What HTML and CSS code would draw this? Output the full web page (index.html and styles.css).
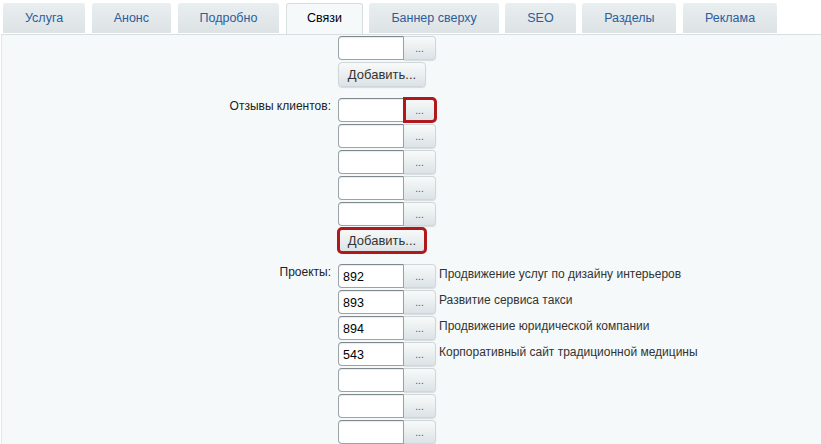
FILE: index.html
```html
<!DOCTYPE html>
<html lang="ru">
<head>
    <meta charset="UTF-8">
    <meta name="viewport" content="width=device-width, initial-scale=1.0">
    <title>Редактирование услуги</title>
    <link rel="stylesheet" href="styles.css">
</head>
<body>
    <div class="tabs">
        <a class="tab">Услуга</a>
        <a class="tab">Анонс</a>
        <a class="tab">Подробно</a>
        <a class="tab active">Связи</a>
        <a class="tab">Баннер сверху</a>
        <a class="tab">SEO</a>
        <a class="tab">Разделы</a>
        <a class="tab">Реклама</a>
    </div>

    <div class="panel">
        <div class="field">
            <div class="field-label"></div>
            <div class="field-values">
                <div class="item"><input type="text" class="id-input"><button class="pick">...</button></div>
                <button class="add">Добавить...</button>
            </div>
        </div>

        <div class="field">
            <div class="field-label">Отзывы клиентов:</div>
            <div class="field-values">
                <div class="item"><input type="text" class="id-input"><button class="pick marked">...</button></div>
                <div class="item"><input type="text" class="id-input"><button class="pick">...</button></div>
                <div class="item"><input type="text" class="id-input"><button class="pick">...</button></div>
                <div class="item"><input type="text" class="id-input"><button class="pick">...</button></div>
                <div class="item"><input type="text" class="id-input"><button class="pick">...</button></div>
                <button class="add marked">Добавить...</button>
            </div>
        </div>

        <div class="field">
            <div class="field-label">Проекты:</div>
            <div class="field-values">
                <div class="item"><input type="text" class="id-input" value="892"><button class="pick">...</button><span class="item-name">Продвижение услуг по дизайну интерьеров</span></div>
                <div class="item"><input type="text" class="id-input" value="893"><button class="pick">...</button><span class="item-name">Развитие сервиса такси</span></div>
                <div class="item"><input type="text" class="id-input" value="894"><button class="pick">...</button><span class="item-name">Продвижение юридической компании</span></div>
                <div class="item"><input type="text" class="id-input" value="543"><button class="pick">...</button><span class="item-name">Корпоративный сайт традиционной медицины</span></div>
                <div class="item"><input type="text" class="id-input"><button class="pick">...</button></div>
                <div class="item"><input type="text" class="id-input"><button class="pick">...</button></div>
                <div class="item"><input type="text" class="id-input"><button class="pick">...</button></div>
            </div>
        </div>
    </div>
</body>
</html>
```

FILE: styles.css
```css
body {
    margin: 0;
    background: #fff;
    font-family: "Liberation Sans", Arial, sans-serif;
    font-size: 12px;
    color: #222;
}
.tabs {
    display: flex;
    gap: 6.5px;
    padding: 3px 0 0 3px;
    position: relative;
    z-index: 1;
}
.tab {
    min-width: 70px;
    height: 30px;
    line-height: 30px;
    padding: 0 22px;
    box-sizing: border-box;
    border-radius: 3px 3px 0 0;
    background: linear-gradient(#e9eef0, #dde3e5);
    color: #2c5d9c;
    font-size: 12.5px;
    text-align: center;
    cursor: pointer;
}
.tab.active {
    background: #f5f9f9;
    color: #000;
    border: 1px solid #d7dfe1;
    border-bottom: none;
    padding: 0 20px;
    height: 31px;
    line-height: 29px;
}
.panel {
    margin-left: 1px;
    border-top: 1px solid #d7dfe1;
    border-left: 1px solid #e3e9eb;
    background: #f5f9f9;
    padding-top: 1px;
    height: 420px;
}
.field {
    display: grid;
    grid-template-columns: 329px auto;
    column-gap: 7px;
    margin-bottom: 11px;
}
.field-label {
    text-align: right;
    line-height: 15px;
    padding-top: 1px;
}
.field-values {
    display: flex;
    flex-direction: column;
    align-items: flex-start;
    gap: 2px;
}
.item {
    display: flex;
    align-items: center;
    height: 24px;
}
.id-input {
    width: 66px;
    height: 24px;
    box-sizing: border-box;
    border: 1px solid #9aa3a8;
    border-top-color: #7f888e;
    border-radius: 4px 0 0 4px;
    background: #fff;
    box-shadow: inset 0 1px 1px rgba(0, 0, 0, 0.08);
    padding: 2px 4px 0;
    font-family: inherit;
    font-size: 12.5px;
    color: #000;
}
.pick,
.add {
    box-sizing: border-box;
    border: 1px solid #d0d7da;
    background: linear-gradient(#f8fafa, #dce3e6);
    box-shadow: 0 1px 1px rgba(0, 0, 0, 0.12);
    font-family: inherit;
    cursor: pointer;
}
.pick {
    width: 32px;
    height: 24px;
    border-left: none;
    border-radius: 0 4px 4px 0;
    font-size: 10px;
    color: #555;
    padding: 2px 0 0;
    line-height: 1;
}
.add {
    width: 88px;
    height: 25px;
    border-radius: 4px;
    font-size: 13px;
    color: #333;
    padding: 0;
}
.marked {
    outline: 3px solid #b0191c;
    outline-offset: -2px;
}
.item-name {
    margin-left: 3px;
    padding-bottom: 4px;
    color: #333;
    white-space: nowrap;
}
```
